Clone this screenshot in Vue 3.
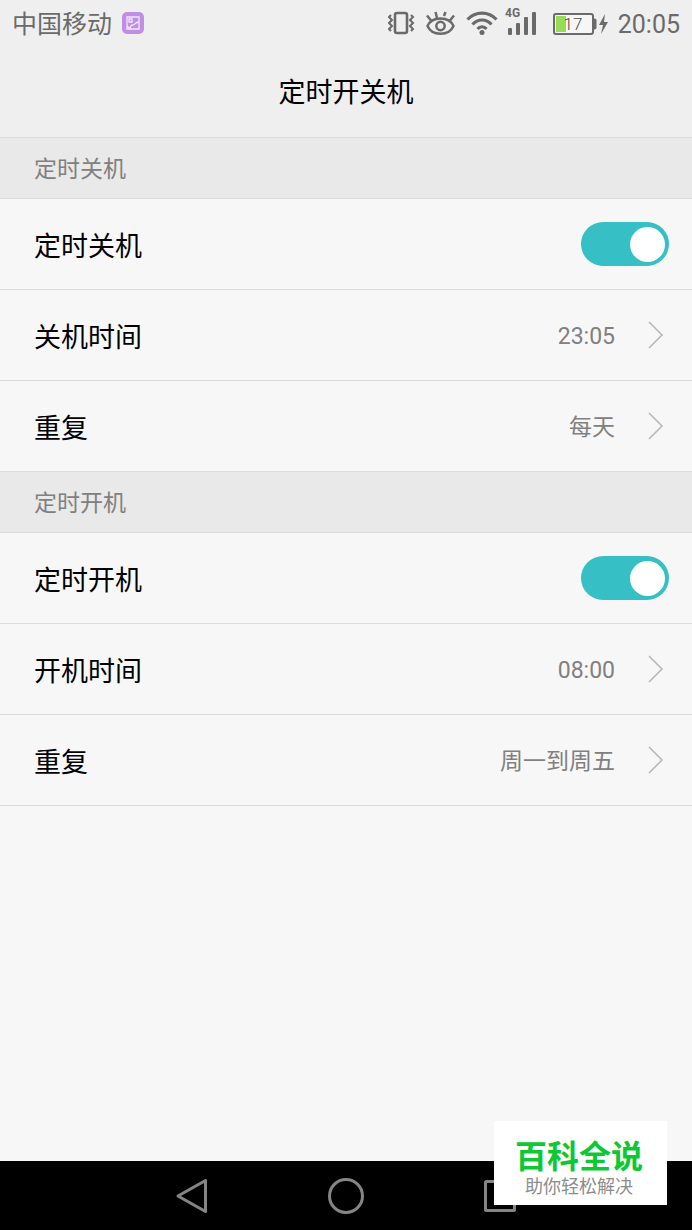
<template>
  <div class="screen">
    <header class="top">
      <div class="status">
        <span class="carrier">中国移动</span>
        <svg class="app-icon" width="22" height="22" viewBox="0 0 22 22" aria-hidden="true">
          <rect width="22" height="22" rx="5" fill="#bf8fe6" />
          <g fill="none" stroke="#f3e6fc" stroke-width="1.3">
            <path d="M5 5h12v12H5z" />
            <path d="M7 7h3v3H7zM8 17c0-3 1-4 3-4s2-3 6-3M5 14l3 3" />
          </g>
        </svg>
        <div class="indicators">
          <svg width="31" height="26" viewBox="0 0 31 26" fill="none" stroke="#6a6a6a" aria-hidden="true">
            <rect x="7" y="3" width="12" height="20" rx="2" stroke-width="2.6" />
            <path d="M3 5l-2 2 3 3-3 3 3 3-3 3 2 2M23 5l2 2-3 3 3 3-3 3 3 3-2 2" stroke-width="2" />
          </svg>
          <svg width="33" height="26" viewBox="0 0 33 26" fill="none" stroke="#6a6a6a" stroke-width="2.5" aria-hidden="true">
            <path d="M1.500 16C4 10.500 9 8.500 14.500 8.500S25 10.500 27.500 16C25 21.500 20 23.800 14.500 23.800S4 21.500 1.500 16z" />
            <circle cx="14.500" cy="16" r="4.2" />
            <path d="M1 5.500l4 5M9.500 2l1.500 6M19.500 2L18 6M28 5.500l-4 5" />
          </svg>
          <svg width="32" height="26" viewBox="0 0 32 26" fill="none" stroke="#6a6a6a" stroke-width="3.2" aria-hidden="true">
            <path d="M1.500 9.500c8-8.500 21-8.500 29 0M6.500 14.500c5.500-6 13.500-6 19 0M11.500 19c2.500-3 6.500-3 9 0" />
            <circle cx="16" cy="22.500" r="2.500" fill="#6a6a6a" stroke="none" />
          </svg>
          <svg width="32" height="38" viewBox="0 -4 32 38" fill="#6a6a6a" aria-hidden="true">
            <text class="net" x="0" y="9">4G</text>
            <rect x="3" y="20" width="4" height="7" rx="1" />
            <rect x="11" y="15" width="4" height="12" rx="1" />
            <rect x="19" y="9" width="4" height="18" rx="1" />
            <rect x="27" y="4" width="4" height="23" rx="1" />
          </svg>
          <svg class="battery" width="59" height="24" viewBox="0 0 59 24" aria-hidden="true">
            <rect x="2" y="3" width="39" height="20" rx="2" fill="#f6f6f6" stroke="#6a6a6a" stroke-width="2" />
            <path d="M42 8h1q1 0 1 1v8q0 1-1 1h-1z" fill="#6a6a6a" stroke="#6a6a6a" />
            <rect x="4" y="5" width="10" height="16" fill="#98dc55" />
            <text class="level" x="21" y="19" text-anchor="middle">17</text>
            <path d="M53 3l-6 11h4l-2 9 7-12h-4z" fill="#6a6a6a" />
          </svg>
          <span class="clock">20:05</span>
        </div>
      </div>
      <h1 class="title">定时开关机</h1>
    </header>

    <main class="content">
      <section v-for="group in groups" :key="group.title">
        <h2 class="group-title">{{ group.title }}</h2>
        <label class="row row-switch">
          <span class="name">{{ group.title }}</span>
          <input v-model="group.enabled" class="switch" type="checkbox" />
        </label>
        <button v-for="item in group.items" :key="item.name" class="row" type="button">
          <span class="name">{{ item.name }}</span>
          <span class="value">{{ item.value }}</span>
          <svg class="chevron" width="16" height="28" viewBox="0 0 16 28" aria-hidden="true">
            <path d="M1 1l13 13L1 27" fill="none" stroke="#b8b8b8" stroke-width="1.6" />
          </svg>
        </button>
      </section>
    </main>

    <nav class="nav">
      <button type="button" aria-label="返回">
        <svg width="36" height="36" viewBox="0 0 36 36">
          <path d="M31.500 2.500v31L4 18z" />
        </svg>
      </button>
      <button type="button" aria-label="主屏幕">
        <svg width="36" height="36" viewBox="0 0 36 36">
          <circle cx="18" cy="18" r="16.500" />
        </svg>
      </button>
      <button type="button" aria-label="最近任务">
        <svg width="36" height="36" viewBox="0 0 36 36">
          <rect x="3.500" y="3.500" width="29" height="29" rx="1" />
        </svg>
      </button>
    </nav>

    <aside class="badge">
      <strong>百科全说</strong>
      <span>助你轻松解决</span>
    </aside>
  </div>
</template>

<script setup>
import { reactive } from 'vue';

const groups = reactive([
  {
    title: '定时关机',
    enabled: true,
    items: [
      { name: '关机时间', value: '23:05' },
      { name: '重复', value: '每天' }
    ]
  },
  {
    title: '定时开机',
    enabled: true,
    items: [
      { name: '开机时间', value: '08:00' },
      { name: '重复', value: '周一到周五' }
    ]
  }
]);
</script>

<style>
body {
  margin: 0;
  background: #f7f7f7;
}
</style>

<style scoped>
.screen {
  display: flex;
  flex-direction: column;
  min-height: 100vh;
  background: #f7f7f7;
  color: #000;
  font-family: Roboto, "Noto Sans CJK SC", sans-serif;
}

.top {
  background: #efefef;
  border-bottom: 1px solid #dcdcdc;
}

.status {
  display: flex;
  align-items: center;
  height: 46px;
  padding: 0 12px;
  color: #6a6a6a;
  font-size: 25px;
  line-height: 32px;
}

.carrier,
.clock,
.value {
  padding-top: 4px;
}

.app-icon {
  margin-left: 10px;
}

.indicators {
  display: flex;
  align-items: center;
  gap: 7px;
  margin-left: auto;
}

.net {
  font: bold 12px Roboto, sans-serif;
}

.battery {
  margin-left: 8px;
}

.level {
  font: 300 17px Roboto, sans-serif;
  fill: #4a4a4a;
}

.title {
  margin: 0;
  padding-top: 4px;
  font-size: 27px;
  font-weight: 400;
  line-height: 87px;
  text-align: center;
}

.content {
  flex: 1;
}

.group-title {
  margin: 0;
  padding: 4px 34px 0;
  border-bottom: 1px solid #dcdcdc;
  background: #e9e9e9;
  color: #808080;
  font-size: 23px;
  font-weight: 400;
  line-height: 56px;
}

.row {
  display: flex;
  align-items: center;
  box-sizing: border-box;
  width: 100%;
  height: 91px;
  padding: 0 28px 0 34px;
  border: 0;
  border-bottom: 1px solid #dcdcdc;
  background: transparent;
  color: #000;
  font: inherit;
  font-size: 27px;
  text-align: left;
}

.row-switch {
  padding-right: 23px;
}

.name {
  flex: 1;
}

.value {
  color: #808080;
  font-size: 23px;
  line-height: 32px;
}

.chevron {
  margin-left: 33px;
}

.switch {
  display: flex;
  align-items: center;
  box-sizing: border-box;
  width: 88px;
  height: 44px;
  margin: 0;
  padding: 0 4px;
  border-radius: 22px;
  background: #c4c4c4;
  appearance: none;
}

.switch::before {
  content: "";
  width: 35px;
  height: 35px;
  border-radius: 50%;
  background: #fff;
}

.switch:checked {
  justify-content: flex-end;
  background: #36bfc4;
}

.nav {
  display: flex;
  justify-content: center;
  height: 69px;
  background: #000;
}

.nav button {
  display: flex;
  align-items: center;
  justify-content: center;
  width: 22.2%;
  padding: 0;
  border: 0;
  background: transparent;
}

.nav svg {
  fill: none;
  stroke: #858585;
  stroke-width: 3;
  stroke-linejoin: round;
}

.badge {
  position: fixed;
  right: 25px;
  bottom: 25px;
  display: flex;
  flex-direction: column;
  align-items: center;
  box-sizing: border-box;
  padding: 18px 24px 6px 21px;
  background: #fff;
}

.badge strong {
  color: #0cc832;
  font-size: 32px;
  font-weight: 700;
  line-height: 36px;
}

.badge span {
  color: #8c8c8c;
  font-size: 18px;
  line-height: 24px;
}
</style>
